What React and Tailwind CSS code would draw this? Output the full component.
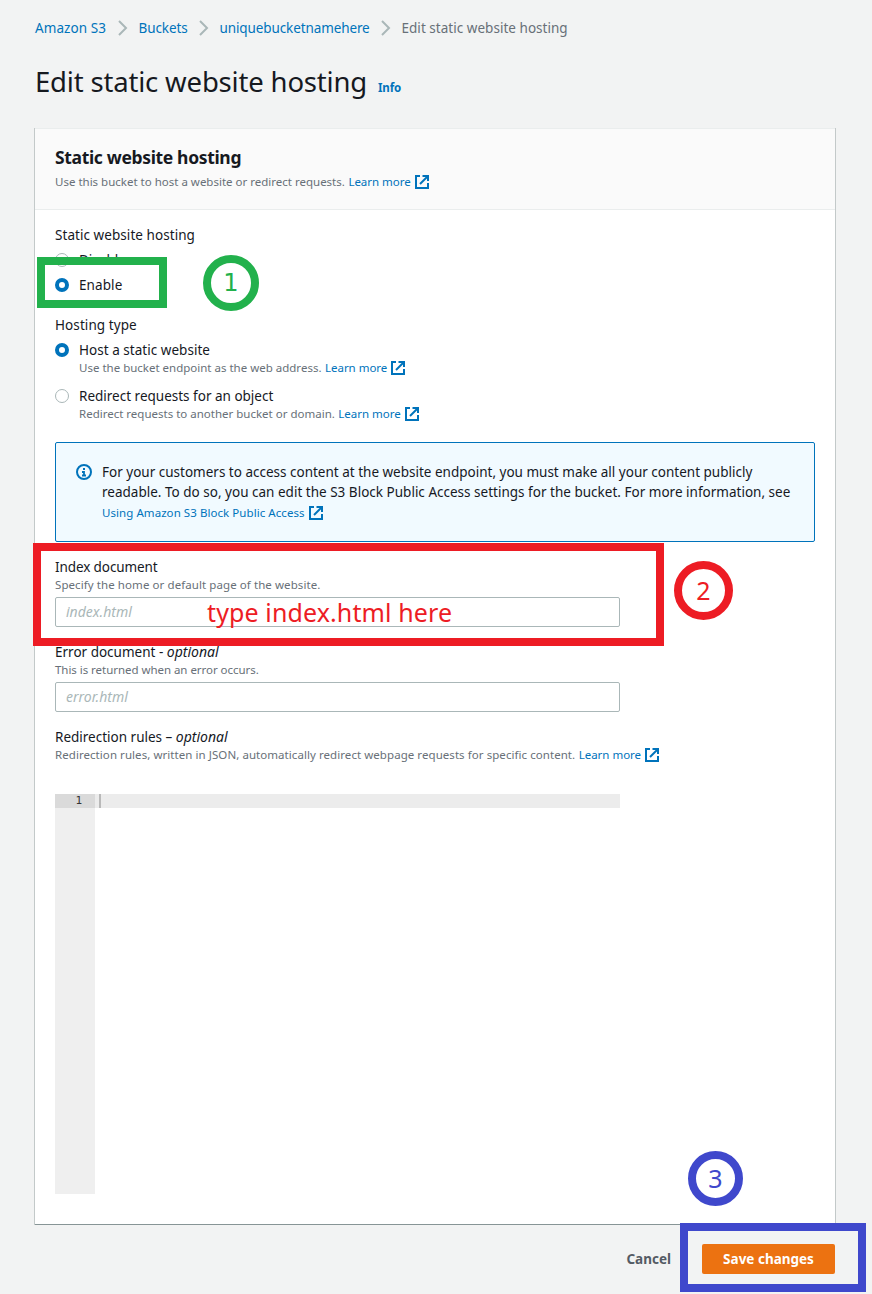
const linkColor = "text-[#0073bb]";

function ExternalIcon() {
  return (
    <svg className="ml-[3px] h-4 w-4 shrink-0" viewBox="0 0 16 16" fill="none" stroke="#0073bb" strokeWidth="2">
      <path d="M6 2H2v12h12V9" />
      <path d="M8.5 2H14v5" />
      <path d="M14 2 6 10" />
    </svg>
  );
}

function ExternalLink({ children, className = "tracking-[-0.02px]" }) {
  return (
    <a className={`inline-flex items-center ${linkColor}`}>
      <span className={className}>{children}</span>
      <ExternalIcon />
    </a>
  );
}

function Chevron() {
  return (
    <svg className="mx-2 h-4 w-4 shrink-0" viewBox="0 0 16 16" fill="none" stroke="#aab7b8" strokeWidth="2">
      <path d="M4 1 11 8l-7 7" />
    </svg>
  );
}

function Radio({ checked }) {
  return checked ? (
    <span className="mt-[3px] h-3.5 w-3.5 shrink-0 rounded-full border-4 border-[#0073bb] bg-white" />
  ) : (
    <span className="mt-[3px] h-3.5 w-3.5 shrink-0 rounded-full border border-[#aab7b8] bg-white" />
  );
}

function Option({ checked, label, children, className = "", tracking = "" }) {
  return (
    <div className={`flex gap-2.5 ${className}`}>
      <Radio checked={checked} />
      <div>
        <div className={`leading-5 ${tracking}`}>{label}</div>
        {children}
      </div>
    </div>
  );
}

const hint = "flex h-4 items-center gap-[3.5px] whitespace-nowrap text-[11.5px] leading-4 text-[#687078]";

function TextField({ value }) {
  return (
    <div className="mt-1 flex h-[30px] w-[565px] items-center rounded-xs border border-[#aab7b8] bg-white px-2.5 text-sm text-[#aab7b8] italic">
      {value}
    </div>
  );
}

function CodeEditor() {
  return (
    <div className="mt-[31px] flex h-[400px] w-[565px] font-['DejaVu_Sans_Mono',monospace] text-[11px] leading-[14px]">
      <div className="w-10 bg-[#efefef]">
        <div className="h-3.5 bg-[#dadada] pr-[13px] text-right text-[#333]">1</div>
      </div>
      <div className="flex-1">
        <div className="flex h-3.5 bg-[#ececec] pl-1">
          <span className="w-0.5 bg-[#b9b9b9]" />
        </div>
      </div>
    </div>
  );
}

export default function App() {
  return (
    <div className="relative h-[1294px] w-[872px] overflow-hidden bg-[#f2f3f3] pt-[18px] font-['Noto_Sans','Open_Sans',sans-serif] text-[13.5px] text-[#16191f]">
      <nav className="flex h-5 items-center pl-[35px] leading-5">
        <a className={`${linkColor} w-[71.5px] tracking-[0.08px]`}>Amazon S3</a>
        <Chevron />
        <a className={`${linkColor} w-[49px] tracking-[-0.1px]`}>Buckets</a>
        <Chevron />
        <a className={`${linkColor} w-[150px] tracking-[-0.11px]`}>uniquebucketnamehere</a>
        <Chevron />
        <span className="tracking-[0.03px] text-[#687078]">Edit static website hosting</span>
      </nav>
      <header className="mt-[26px] flex h-9 items-baseline pl-[35px]">
        <h1 className="w-[343px] text-[27.5px] leading-9 tracking-[-0.18px]">Edit static website hosting</h1>
        <a className={`${linkColor} text-[11.5px] font-bold tracking-[-0.1px]`}>Info</a>
      </header>

      <section className="mt-[29px] ml-[35px] h-[1095px] w-[800px] bg-white shadow-[0_1px_0_0_#879596,0_-1px_0_0_#eaeded,0_0_0_1px_#c3c9c9]">
        <div className="h-[81px] border-b border-[#eaeded] bg-[#fafafa] px-5 pt-[17px]">
          <h2 className="text-[17.5px] leading-[22px] font-bold tracking-[-0.34px]">Static website hosting</h2>
          <p className={`${hint} mt-1.5`}>
            <span>Use this bucket to host a website or redirect requests.</span>
            <ExternalLink>Learn more</ExternalLink>
          </p>
        </div>
        <div className="px-5 pt-[15px]">
          <div className="leading-5 tracking-[0.06px]">Static website hosting</div>
          <Option className="mt-[5px]" label="Disable" />
          <Option className="mt-[5px]" checked label="Enable" tracking="tracking-[0.1px]" />

          <div className="mt-5 leading-5 tracking-[0.08px]">Hosting type</div>
          <Option className="mt-[5px]" checked label="Host a static website" tracking="tracking-[0.03px]">
            <p className={hint}>
              <span>Use the bucket endpoint as the web address.</span>
              <ExternalLink>Learn more</ExternalLink>
            </p>
          </Option>
          <Option className="mt-2.5" label="Redirect requests for an object">
            <p className={hint}>
              <span>Redirect requests to another bucket or domain.</span>
              <ExternalLink>Learn more</ExternalLink>
            </p>
          </Option>

          <div className="mt-5 flex h-[100px] gap-2.5 rounded-xs border border-[#0073bb] bg-[#f1faff] pt-[19px] pl-5">
            <svg className="mt-0.5 h-4 w-4 shrink-0" viewBox="0 0 16 16" fill="none" stroke="#0073bb" strokeWidth="2">
              <circle cx="8" cy="8" r="7" />
              <path d="M7 5h2M6 8h2v3M6 11.5h4" strokeWidth="1.8" />
            </svg>
            <div className="leading-5 whitespace-nowrap">
              <div>For your customers to access content at the website endpoint, you must make all your content publicly</div>
              <div className="tracking-[0.01px]">readable. To do so, you can edit the S3 Block Public Access settings for the bucket. For more information, see</div>
              <div className="mt-px flex h-5 items-center text-[11.5px]">
                <ExternalLink className="tracking-[0.06px]">Using Amazon S3 Block Public Access</ExternalLink>
              </div>
            </div>
          </div>

          <div className="mt-[15px] leading-5 tracking-[-0.1px]">Index document</div>
          <p className={hint}><span className="tracking-[0.08px]">Specify the home or default page of the website.</span></p>
          <TextField value="index.html" />

          <div className="mt-[15px] leading-5"><span>Error document - </span><i className="text-sm leading-5">optional</i></div>
          <p className={hint}><span className="tracking-[-0.04px]">This is returned when an error occurs.</span></p>
          <TextField value="error.html" />

          <div className="mt-[15px] leading-5"><span>Redirection rules – </span><i className="text-sm leading-5">optional</i></div>
          <p className={hint}>
            <span className="tracking-[0.06px]">Redirection rules, written in JSON, automatically redirect webpage requests for specific content.</span>
            <ExternalLink>Learn more</ExternalLink>
          </p>
          <CodeEditor />
        </div>
      </section>

      <footer className="mt-5 flex h-[30px] items-center justify-end pr-[37px] font-bold">
        <button className="mr-[31px] text-[#545b64]">Cancel</button>
        <button className="h-[30px] w-[133px] rounded-xs bg-[#ec7211] text-white">Save changes</button>
      </footer>

      {/* Step markers drawn over the form */}
      <div className="absolute top-[257px] left-[37px] h-[51px] w-[130px] border-8 border-[#22b14c]" />
      <div className="absolute top-[255px] left-[203px] flex h-14 w-14 items-center justify-center rounded-full border-8 border-[#22b14c] font-['DejaVu_Sans',sans-serif] text-2xl leading-none text-[#22b14c]">1</div>
      <div className="absolute top-[543px] left-[33px] h-[103px] w-[631px] border-8 border-[#ed1c24]" />
      <div className="absolute top-[561px] left-[674px] flex h-[59px] w-[59px] items-center justify-center rounded-full border-8 border-[#ed1c24] text-[25px] leading-none text-[#ed1c24]">2</div>
      <div className="absolute top-[596px] left-[207px] text-[25px] leading-8 tracking-[0.12px] whitespace-nowrap text-[#ed1c24]">type index.html here</div>
      <div className="absolute top-[1151px] left-[688px] flex h-[55px] w-[55px] items-center justify-center rounded-full border-8 border-[#3f48cc] text-[25px] leading-none text-[#3f48cc]">3</div>
      <div className="absolute top-[1223px] left-[680px] h-[69px] w-[186px] border-8 border-[#3f48cc]" />
    </div>
  );
}
